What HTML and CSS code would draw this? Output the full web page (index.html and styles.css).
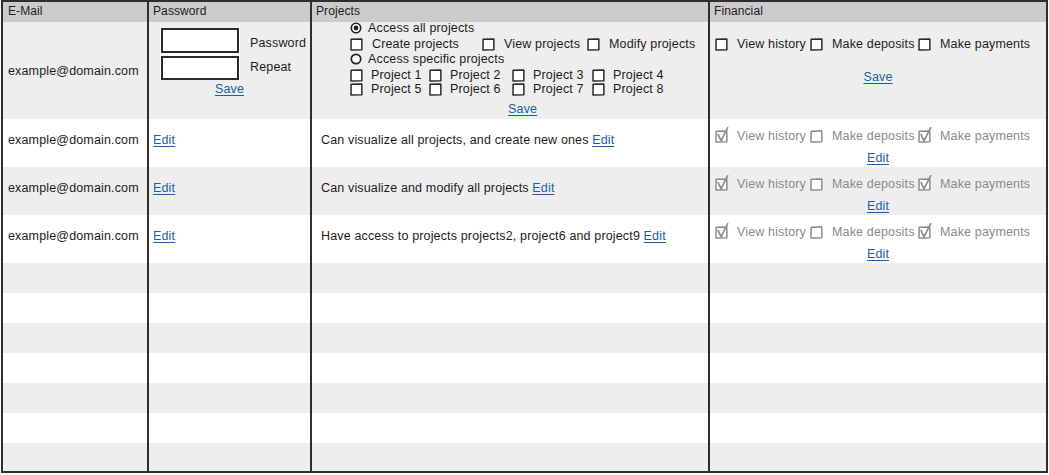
FILE: index.html
```html
<!DOCTYPE html>
<html>
<head>
<meta charset="utf-8">
<title>Users</title>
<link rel="stylesheet" href="styles.css">
</head>
<body>
<svg class="defs" width="0" height="0" aria-hidden="true">
  <symbol id="cb" viewBox="0 0 13 13"><path d="M1.1 1.3 L11.8 1 L11.9 11.8 L1 12 Z" fill="#fff" stroke="#2a2a2a" stroke-width="1.5" stroke-linejoin="round"/></symbol>
  <symbol id="cb-off" viewBox="0 0 13 13"><path d="M1.1 1.3 L11.8 1 L11.9 11.8 L1 12 Z" fill="#fff" stroke="#8c8c8c" stroke-width="1.5" stroke-linejoin="round"/></symbol>
  <symbol id="cb-on" viewBox="0 -3 14 16"><path d="M1.1 1.3 L11.8 1 L11.9 11.8 L1 12 Z" fill="#fff" stroke="#8c8c8c" stroke-width="1.5" stroke-linejoin="round"/><path d="M3.2 4.6 L6 10.8 L12.6 -2.2" fill="none" stroke="#8c8c8c" stroke-width="1.7" stroke-linecap="round" stroke-linejoin="round"/></symbol>
  <symbol id="radio-on" viewBox="0 0 12 12"><circle cx="6" cy="6" r="4.7" fill="#fff" stroke="#222" stroke-width="1.6"/><circle cx="6" cy="6" r="2.4" fill="#222"/></symbol>
  <symbol id="radio" viewBox="0 0 12 12"><circle cx="6" cy="6" r="4.7" fill="#fff" stroke="#222" stroke-width="1.7"/></symbol>
</svg>

<div class="sheet">
  <div class="row head">
    <div class="cell">E-Mail</div>
    <div class="cell">Password</div>
    <div class="cell">Projects</div>
    <div class="cell">Financial</div>
  </div>

  <div class="row edit-row">
    <div class="cell email-cell">example@domain.com</div>
    <div class="cell pw-cell">
      <div class="pw-form">
        <div class="pw-boxes"><span class="input"></span><span class="input"></span></div>
        <div class="pw-labels"><span>Password</span><span>Repeat</span></div>
      </div>
      <a class="link" href="#">Save</a>
    </div>
    <div class="cell proj-cell">
      <div class="proj-group">
        <div class="opt radio-line"><svg class="radio-ic"><use href="#radio-on"/></svg><span>Access all projects</span></div>
        <div class="opt-row perms">
          <div class="opt"><svg class="cb-ic"><use href="#cb"/></svg><span>Create projects</span></div>
          <div class="opt"><svg class="cb-ic"><use href="#cb"/></svg><span>View projects</span></div>
          <div class="opt"><svg class="cb-ic"><use href="#cb"/></svg><span>Modify projects</span></div>
        </div>
        <div class="opt radio-line second"><svg class="radio-ic"><use href="#radio"/></svg><span>Access specific projects</span></div>
        <div class="proj-grid">
          <div class="opt"><svg class="cb-ic"><use href="#cb"/></svg><span>Project 1</span></div>
          <div class="opt"><svg class="cb-ic"><use href="#cb"/></svg><span>Project 2</span></div>
          <div class="opt"><svg class="cb-ic"><use href="#cb"/></svg><span>Project 3</span></div>
          <div class="opt"><svg class="cb-ic"><use href="#cb"/></svg><span>Project 4</span></div>
          <div class="opt"><svg class="cb-ic"><use href="#cb"/></svg><span>Project 5</span></div>
          <div class="opt"><svg class="cb-ic"><use href="#cb"/></svg><span>Project 6</span></div>
          <div class="opt"><svg class="cb-ic"><use href="#cb"/></svg><span>Project 7</span></div>
          <div class="opt"><svg class="cb-ic"><use href="#cb"/></svg><span>Project 8</span></div>
        </div>
        <a class="link proj-save" href="#">Save</a>
      </div>
    </div>
    <div class="cell fin-cell">
      <div class="opt-row fin-opts">
        <div class="opt"><svg class="cb-ic"><use href="#cb"/></svg><span>View history</span></div>
        <div class="opt"><svg class="cb-ic"><use href="#cb"/></svg><span>Make deposits</span></div>
        <div class="opt"><svg class="cb-ic"><use href="#cb"/></svg><span>Make payments</span></div>
      </div>
      <a class="link fin-save" href="#">Save</a>
    </div>
  </div>

  <div class="row data white">
    <div class="cell email-cell">example@domain.com</div>
    <div class="cell edit-cell"><a class="link" href="#">Edit</a></div>
    <div class="cell desc-cell">Can visualize all projects, and create new ones <a class="link" href="#">Edit</a></div>
    <div class="cell fin-view">
      <div class="opt-row fin-opts disabled">
        <div class="opt"><svg class="cb-ic on"><use href="#cb-on"/></svg><span>View history</span></div>
        <div class="opt"><svg class="cb-ic"><use href="#cb-off"/></svg><span>Make deposits</span></div>
        <div class="opt"><svg class="cb-ic on"><use href="#cb-on"/></svg><span>Make payments</span></div>
      </div>
      <a class="link" href="#">Edit</a>
    </div>
  </div>

  <div class="row data gray">
    <div class="cell email-cell">example@domain.com</div>
    <div class="cell edit-cell"><a class="link" href="#">Edit</a></div>
    <div class="cell desc-cell">Can visualize and modify all projects <a class="link" href="#">Edit</a></div>
    <div class="cell fin-view">
      <div class="opt-row fin-opts disabled">
        <div class="opt"><svg class="cb-ic on"><use href="#cb-on"/></svg><span>View history</span></div>
        <div class="opt"><svg class="cb-ic"><use href="#cb-off"/></svg><span>Make deposits</span></div>
        <div class="opt"><svg class="cb-ic on"><use href="#cb-on"/></svg><span>Make payments</span></div>
      </div>
      <a class="link" href="#">Edit</a>
    </div>
  </div>

  <div class="row data white">
    <div class="cell email-cell">example@domain.com</div>
    <div class="cell edit-cell"><a class="link" href="#">Edit</a></div>
    <div class="cell desc-cell">Have access to projects projects2, project6 and project9 <a class="link" href="#">Edit</a></div>
    <div class="cell fin-view">
      <div class="opt-row fin-opts disabled">
        <div class="opt"><svg class="cb-ic on"><use href="#cb-on"/></svg><span>View history</span></div>
        <div class="opt"><svg class="cb-ic"><use href="#cb-off"/></svg><span>Make deposits</span></div>
        <div class="opt"><svg class="cb-ic on"><use href="#cb-on"/></svg><span>Make payments</span></div>
      </div>
      <a class="link" href="#">Edit</a>
    </div>
  </div>

  <div class="row empty gray"><div class="cell"></div><div class="cell"></div><div class="cell"></div><div class="cell"></div></div>
  <div class="row empty white"><div class="cell"></div><div class="cell"></div><div class="cell"></div><div class="cell"></div></div>
  <div class="row empty gray"><div class="cell"></div><div class="cell"></div><div class="cell"></div><div class="cell"></div></div>
  <div class="row empty white"><div class="cell"></div><div class="cell"></div><div class="cell"></div><div class="cell"></div></div>
  <div class="row empty gray"><div class="cell"></div><div class="cell"></div><div class="cell"></div><div class="cell"></div></div>
  <div class="row empty white"><div class="cell"></div><div class="cell"></div><div class="cell"></div><div class="cell"></div></div>
  <div class="row empty gray last"><div class="cell"></div><div class="cell"></div><div class="cell"></div><div class="cell"></div></div>
</div>
</body>
</html>
```

FILE: styles.css
```css
* { box-sizing: border-box; }

body {
  margin: 0;
  background: #ffffff;
  font-family: "Liberation Sans", Arial, sans-serif;
  font-size: 12.5px;
  letter-spacing: 0.15px;
  color: #1c1c1c;
}

.defs { position: absolute; width: 0; height: 0; overflow: hidden; }

.sheet {
  margin-left: 1px;
  width: 1047px;
  height: 473px;
  border: 2px solid #2d2d33;
  display: flex;
  flex-direction: column;
  overflow: hidden;
}

.row {
  display: grid;
  grid-template-columns: 146px 163px 398px 1fr;
}

.cell {
  border-right: 2px solid #2d2d33;
  min-width: 0;
}
.cell:last-child { border-right: 0; }

.head {
  height: 20px;
  background: #cbcbcb;
  font-size: 12px;
  letter-spacing: 0.1px;
}
.head .cell {
  line-height: 19px;
  padding-left: 4px;
}
.head .cell:first-child { padding-left: 5px; }

.link {
  color: #1b5ea8;
  text-decoration: underline;
  text-underline-offset: 2px;
}

.gray { background: #eeeeee; }
.white { background: #ffffff; }

/* edit row */
.edit-row {
  height: 97px;
  background: #eeeeee;
}

.email-cell {
  padding-left: 5px;
  display: flex;
  align-items: center;
}

.pw-cell {
  display: flex;
  flex-direction: column;
  align-items: center;
  padding-top: 6px;
}
.pw-form {
  align-self: flex-start;
  margin-left: 11px;
  display: flex;
  gap: 10px;
}
.pw-boxes {
  background: #ffffff;
  width: 80px;
  padding: 0 1px;
  display: flex;
  flex-direction: column;
  gap: 3px;
}
.input {
  display: block;
  height: 24px;
  border: 2px solid #2a2a2a;
  background: #ffffff;
}
.input:first-child { height: 25px; }
.pw-labels {
  display: flex;
  flex-direction: column;
  padding-top: 8px;
  gap: 10px;
  line-height: 14px;
}
.pw-cell .link { margin-top: 2px; line-height: 14px; }

.opt {
  display: flex;
  align-items: center;
  white-space: nowrap;
  line-height: 14px;
}
.cb-ic {
  width: 13px;
  height: 13px;
  flex: none;
  overflow: visible;
}
.cb-ic.on {
  width: 14px;
  height: 16px;
  margin-top: -3px;
  margin-right: -1px;
}
.radio-ic {
  width: 12px;
  height: 12px;
  flex: none;
}

.proj-cell {
  padding-left: 38px;
}
.proj-group {
  display: inline-flex;
  flex-direction: column;
}
.radio-line {
  height: 14px;
  margin-top: -1px;
}
.radio-line span { margin-left: 6px; }
.radio-line.second { margin-top: 1px; }

.opt-row {
  display: flex;
  height: 14px;
}
.opt-row .opt span { margin-left: 9px; }

.perms { margin-top: 2px; }
.perms .opt:nth-child(1) { width: 132px; }
.perms .opt:nth-child(2) { width: 105px; }

.proj-grid {
  margin-top: 2px;
  display: grid;
  grid-template-columns: 79px 83px 80px auto;
  grid-auto-rows: 14px;
}
.proj-grid .opt span { margin-left: 8px; }

.proj-save {
  align-self: center;
  margin-top: 6px;
  line-height: 14px;
}

.fin-cell {
  padding-left: 5px;
  padding-top: 15px;
  display: flex;
  flex-direction: column;
}
.fin-opts .opt:nth-child(1) { width: 95px; }
.fin-opts .opt:nth-child(2) { width: 108px; }
.fin-save {
  align-self: center;
  margin-left: -5px;
  margin-top: 19px;
  line-height: 14px;
}

/* data rows */
.data { height: 48px; }
.data .email-cell {
  align-items: flex-start;
  padding-top: 14px;
  line-height: 14px;
}
.edit-cell {
  padding-left: 4px;
  padding-top: 14px;
  line-height: 14px;
}
.desc-cell {
  padding-left: 9px;
  padding-top: 14px;
  line-height: 14px;
}
.fin-view {
  padding-left: 5px;
  padding-top: 10px;
  display: flex;
  flex-direction: column;
}
.fin-view .link {
  align-self: center;
  margin-left: -5px;
  margin-top: 8px;
  line-height: 14px;
}
.disabled { color: #8a8a8a; }

.empty { height: 30px; }
.last { flex: 1; height: auto; }
```
